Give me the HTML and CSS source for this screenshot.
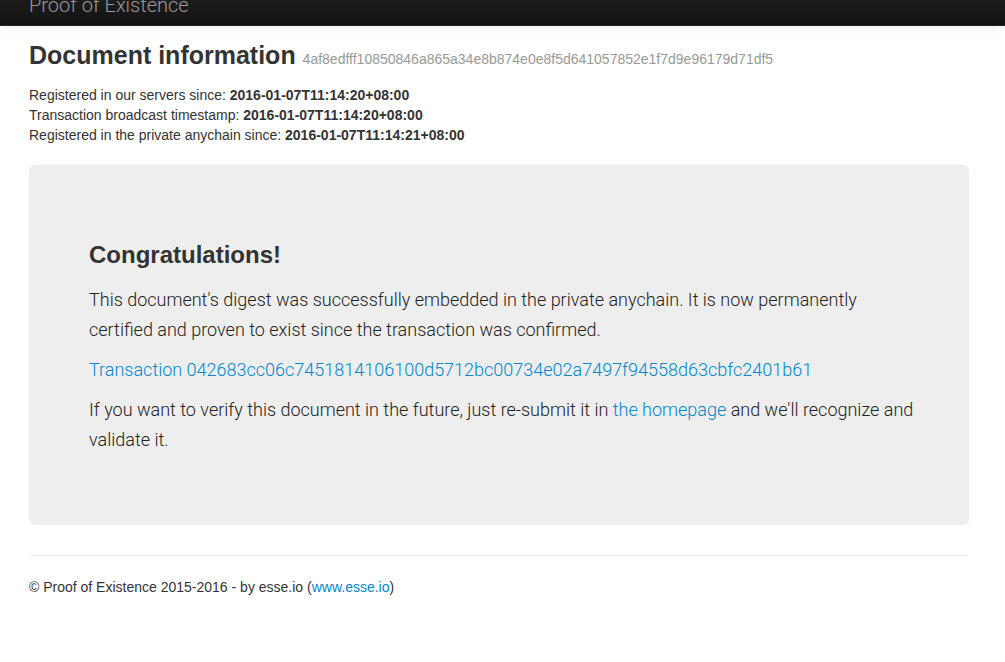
FILE: index.html
```html
<!DOCTYPE html>
<html lang="en">
<head>
<meta charset="utf-8">
<title>Proof of Existence</title>
<link rel="stylesheet" href="styles.css">
</head>
<body>
<header class="navbar">
  <div class="container"><a class="brand" href="#">Proof of Existence</a></div>
</header>
<div class="container">
  <main>
    <h1 class="title">Document information <small class="digest">4af8edfff10850846a865a34e8b874e0e8f5d641057852e1f7d9e96179d71df5</small></h1>
    <div class="facts">
      <div>Registered in our servers since: <strong>2016-01-07T11:14:20+08:00</strong></div>
      <div>Transaction broadcast timestamp: <strong>2016-01-07T11:14:20+08:00</strong></div>
      <div>Registered in the private anychain since: <strong>2016-01-07T11:14:21+08:00</strong></div>
    </div>
    <section class="hero">
      <h2 class="hero-title">Congratulations!</h2>
      <p>This document's digest was successfully embedded in the private anychain. It is now permanently certified and proven to exist since the transaction was confirmed.</p>
      <p><a class="link" href="#">Transaction 042683cc06c7451814106100d5712bc00734e02a7497f94558d63cbfc2401b61</a></p>
      <p>If you want to verify this document in the future, just re-submit it in <a class="link" href="#">the homepage</a> and we'll recognize and validate it.</p>
    </section>
  </main>
  <footer class="footer">© Proof of Existence 2015-2016 - by esse.io (<a class="link" href="#">www.esse.io</a>)</footer>
</div>
</body>
</html>
```
FILE: styles.css
```css
body {
  margin: 0;
  background: #fff;
  color: #333;
  font: 14px/20px "Liberation Sans", Arial, sans-serif;
}
.container {
  max-width: 940px;
  margin: 0 auto;
  padding: 0 36px 0 29px;
}
.navbar {
  height: 25px;
  overflow: hidden;
  background: linear-gradient(#1d1d1d, #111);
  border-bottom: 1px solid #252525;
  box-shadow: 0 1px 10px rgba(0, 0, 0, 0.1);
}
.brand {
  display: block;
  margin-top: -5px;
  font-family: Roboto, "Liberation Sans", sans-serif;
  font-weight: 300;
  font-size: 20px;
  line-height: 20px;
  color: #999;
  text-decoration: none;
}
.title {
  margin: 9px 0 10px;
  font-size: 25px;
  line-height: 40px;
  white-space: nowrap;
}
.digest {
  font-size: 14px;
  line-height: 20px;
  font-weight: normal;
  color: #999;
}
.facts {
  margin-bottom: 20px;
}
.hero {
  margin-bottom: 30px;
  padding: 60px 50px 60px 60px;
  background: #eee;
  border-radius: 6px;
  color: #222;
  font-family: Roboto, "Liberation Sans", sans-serif;
  font-weight: 300;
  font-size: 18px;
  line-height: 30px;
}
.hero-title {
  margin: 10px 0;
  color: #333;
  font-family: "Liberation Sans", Arial, sans-serif;
  font-weight: bold;
  font-size: 24px;
  line-height: 40px;
}
.hero p {
  margin: 0 0 10px;
}
.link {
  color: #08c;
  text-decoration: none;
}
.footer {
  padding: 21px 0;
  border-top: 1px solid #eee;
}
```
